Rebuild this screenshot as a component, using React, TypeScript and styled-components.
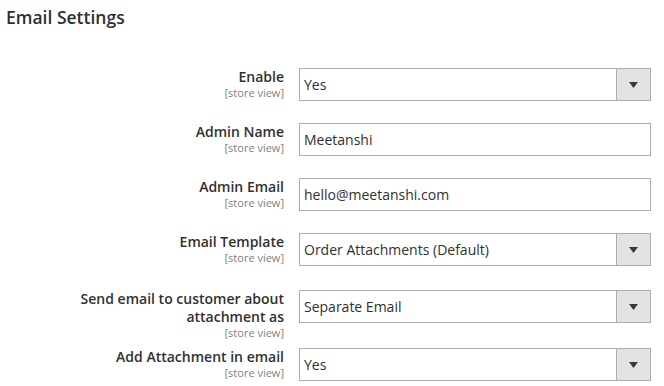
import React from "react";
import styled, { createGlobalStyle } from "styled-components";

const Global = createGlobalStyle`
  html, body { margin: 0; padding: 0; background: #ffffff; }
  body { font-family: "Open Sans", "Liberation Sans", sans-serif; color: #303030; }
`;

const Page = styled.div`
  width: 664px;
  height: 386px;
  overflow: hidden;
  padding: 5px 0 0 6px;
  box-sizing: border-box;
`;

const Title = styled.h2`
  margin: 0;
  font-size: 17.5px;
  line-height: 24px;
  font-weight: 600;
  color: #303030;
`;

const Fieldset = styled.div`
  display: flex;
  flex-direction: column;
  padding-top: 39px;
`;

const Row = styled.div<{ $extraTop?: number }>`
  display: grid;
  grid-template-columns: 278px 352px;
  column-gap: 15px;
  align-items: start;
  margin-top: ${(p) => p.$extraTop ?? 0}px;
  margin-bottom: 9px;
`;

const LabelBox = styled.div`
  display: flex;
  flex-direction: column;
  align-items: flex-end;
  text-align: right;
`;

const LabelText = styled.span`
  font-size: 14px;
  line-height: 18px;
  font-weight: 600;
  color: #303030;
`;

const Scope = styled.span`
  font-size: 11px;
  line-height: 13px;
  color: #808080;
`;

const Control = styled.div`
  padding-bottom: 13px;
`;

const Field = styled.div`
  box-sizing: border-box;
  height: 33px;
  border: 1px solid #adadad;
  background: #fff;
  display: flex;
  align-items: stretch;
`;

const Value = styled.span`
  flex: 1;
  display: flex;
  align-items: center;
  padding-left: 4px;
  font-size: 14px;
  color: #303030;
`;

const Arrow = styled.span`
  width: 33px;
  border-left: 1px solid #adadad;
  background: #e3e3e3;
  display: flex;
  align-items: center;
  justify-content: center;
`;

type Item = { label: string; value: string; select: boolean; extraTop?: number };

const items: Item[] = [
  { label: "Enable", value: "Yes", select: true },
  { label: "Admin Name", value: "Meetanshi", select: false },
  { label: "Admin Email", value: "hello@meetanshi.com", select: false },
  { label: "Email Template", value: "Order Attachments (Default)", select: true },
  { label: "Send email to customer about attachment as", value: "Separate Email", select: true, extraTop: 2 },
  { label: "Add Attachment in email", value: "Yes", select: true },
];

export default function App() {
  return (
    <>
      <Global />
      <Page>
        <Title>Email Settings</Title>
        <Fieldset>
          {items.map((it) => (
            <Row key={it.label} $extraTop={it.extraTop}>
              <LabelBox>
                <LabelText>{it.label}</LabelText>
                <Scope>[store view]</Scope>
              </LabelBox>
              <Control>
                <Field>
                  <Value>{it.value}</Value>
                  {it.select && (
                    <Arrow>
                      <svg width="9" height="6" viewBox="0 0 9 6">
                        <path d="M0 0 H9 L4.5 6 Z" fill="#41362f" />
                      </svg>
                    </Arrow>
                  )}
                </Field>
              </Control>
            </Row>
          ))}
        </Fieldset>
      </Page>
    </>
  );
}
